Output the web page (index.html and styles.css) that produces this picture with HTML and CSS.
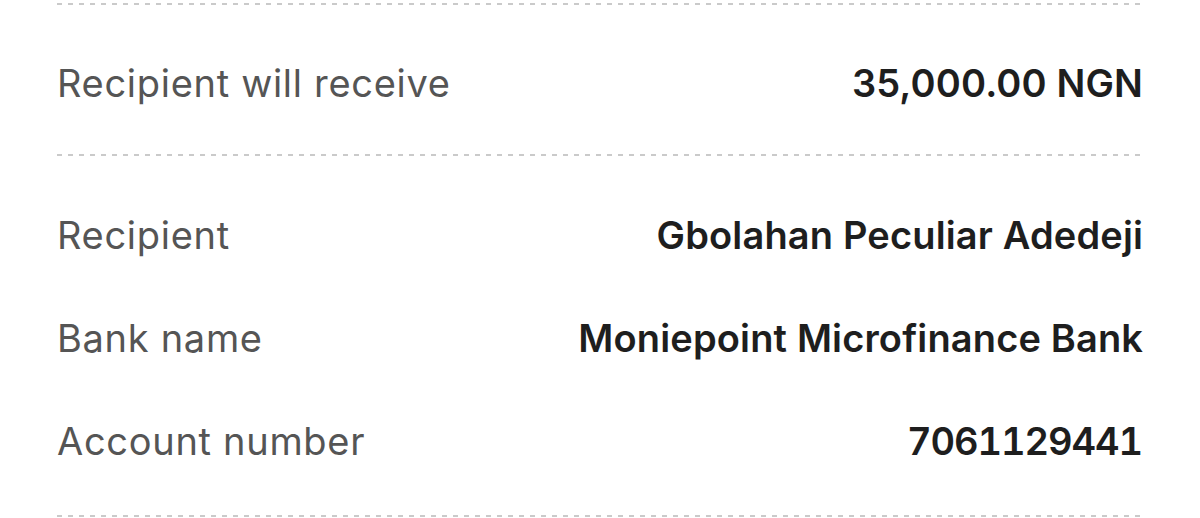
FILE: index.html
```html
<!DOCTYPE html>
<html lang="en">
<head>
<meta charset="utf-8">
<title>Transfer details</title>
<link rel="stylesheet" href="styles.css">
</head>
<body>
<main class="details">
  <div class="divider"></div>
  <section class="group group-single">
    <div class="row">
      <span class="label">Recipient will receive</span>
      <span class="value">35,000.00 NGN</span>
    </div>
  </section>
  <div class="divider"></div>
  <section class="group group-multi">
    <div class="row">
      <span class="label">Recipient</span>
      <span class="value">Gbolahan Peculiar Adedeji</span>
    </div>
    <div class="row">
      <span class="label">Bank name</span>
      <span class="value">Moniepoint Microfinance Bank</span>
    </div>
    <div class="row">
      <span class="label">Account number</span>
      <span class="value value-number">7061129441</span>
    </div>
  </section>
  <div class="divider"></div>
</main>
</body>
</html>
```
FILE: styles.css
```css
html, body {
  margin: 0;
  padding: 0;
  background: #ffffff;
}
body {
  font-family: Inter, "Liberation Sans", sans-serif;
  width: 1200px;
  height: 518px;
  overflow: hidden;
}
.details {
  padding: 3px 57px 0 57px;
  display: flex;
  flex-direction: column;
}
.divider {
  height: 2px;
  flex: none;
  background-image: linear-gradient(to right, #cacaca 0 5px, transparent 5px 11px);
  background-size: 11px 2px;
  background-repeat: repeat-x;
}
.group {
  display: flex;
  flex-direction: column;
}
.group-single {
  padding: 55px 0 48px;
}
.group-multi {
  padding: 56px 0 51px;
  gap: 57px;
}
.row {
  display: flex;
  justify-content: space-between;
  align-items: baseline;
  line-height: 46px;
  height: 46px;
  font-size: 38px;
}
.label {
  color: #555555;
  font-weight: 400;
  letter-spacing: 0.7px;
}
.value {
  color: #1e1e1e;
  font-weight: 600;
  letter-spacing: 0.15px;
  margin-right: -0.15px;
}
.value-number {
  font-variant-numeric: tabular-nums;
  letter-spacing: -1.1px;
  margin-right: 1.1px;
}
```
